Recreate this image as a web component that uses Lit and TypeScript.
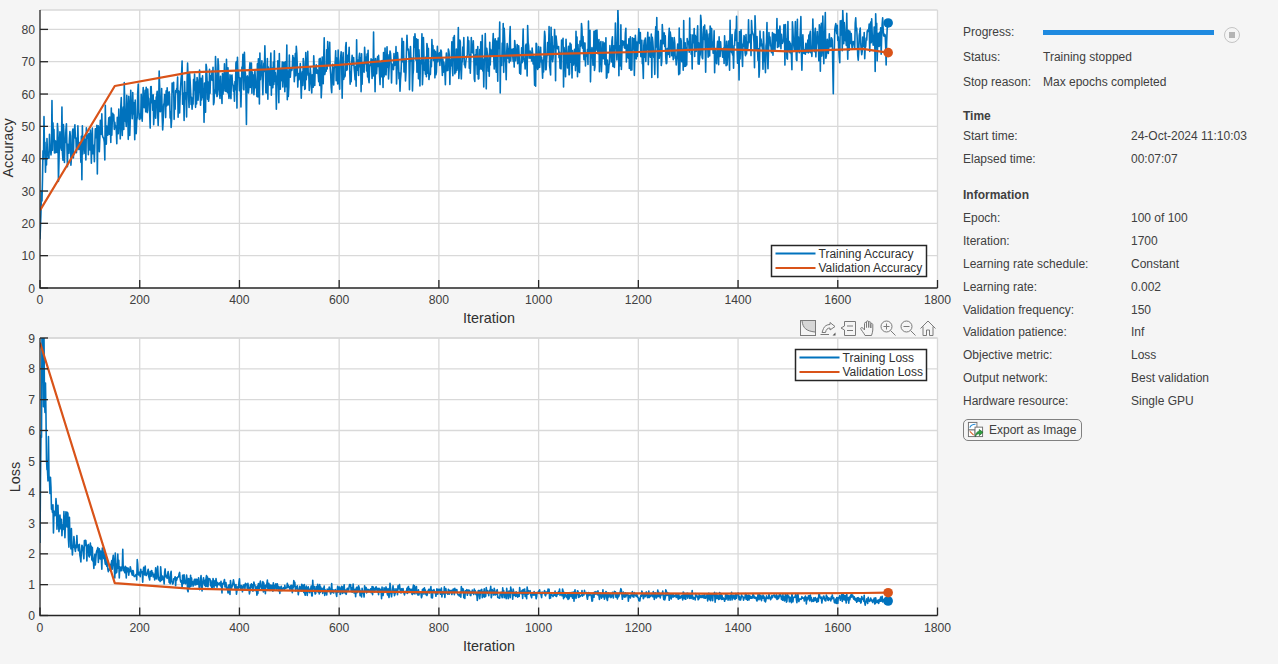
import { LitElement, html, svg, css } from "lit";
import { customElement, property } from "lit/decorators.js";

type Pt = [number, number];

function rng(seed: number) {
  return () => {
    seed |= 0; seed = (seed + 0x6d2b79f5) | 0;
    let t = Math.imul(seed ^ (seed >>> 15), 1 | seed);
    t = (t + Math.imul(t ^ (t >>> 7), 61 | t)) ^ t;
    return ((t ^ (t >>> 14)) >>> 0) / 4294967296;
  };
}
function interp(p: Pt[], x: number) {
  for (let i = 1; i < p.length; i++) {
    if (x <= p[i][0]) {
      const [a, b] = p[i - 1]; const [c, d] = p[i];
      return b + ((d - b) * (x - a)) / (c - a);
    }
  }
  return p[p.length - 1][1];
}

function accuracyData(): Pt[] {
  const r = rng(11);
  const mean: Pt[] = [[0, 15], [3, 28], [7, 42], [20, 45], [100, 46], [130, 50], [170, 53], [230, 56.5], [300, 60.5], [400, 64.5], [500, 66.5], [600, 68], [800, 70.5], [1000, 72], [1200, 73.5], [1400, 75], [1600, 77], [1700, 78]];
  const out: Pt[] = [];
  for (let i = 0; i <= 1700; i++) {
    const amp = i < 110 ? 7 : 8.2;
    const g = (r() + r() + r() - 1.5) * amp;
    const spike = r() < 0.05 ? (r() < 0.75 ? -8 : 5) * r() : 0;
    out.push([i, interp(mean, i) + (i < 3 ? 0 : g + spike)]);
  }
  out[8][1] = 53; out[24][1] = 58; out[44][1] = 56; out[37][1] = 33; out[62][1] = 38; out[84][1] = 33.5;
  out[1675][1] = 67; out[1698][1] = 76; out[1699][1] = 80; out[1700][1] = 82;
  return out;
}
function lossData(): Pt[] {
  const r = rng(29);
  const mean: Pt[] = [[0, 4], [2, 7], [5, 8.2], [10, 7.4], [13, 5.2], [17, 4.8], [24, 3.4], [40, 3.05], [55, 2.85], [62, 2.3], [100, 2.1], [130, 1.75], [170, 1.5], [230, 1.3], [300, 1.08], [400, 0.95], [600, 0.82], [800, 0.76], [1000, 0.7], [1200, 0.65], [1400, 0.6], [1700, 0.5]];
  const out: Pt[] = [];
  for (let i = 0; i <= 1700; i++) {
    const m = interp(mean, i);
    const amp = i < 14 ? 2 : 0.04 + m * 0.2;
    const g = (r() + r() + r() - 1.5) * amp;
    out.push([i, m + g]);
  }
  out[4][1] = 9.2; out[8][1] = 9.1; out[17][1] = 5.8; out[56][1] = 3.3; out[166][1] = 2.15;
  out[1700][1] = 0.47;
  return out;
}

const valAcc: Pt[] = [[0, 24], [150, 62.5], [300, 66.7], [450, 67.6], [600, 69], [750, 71], [900, 71.7], [1050, 72.5], [1200, 73], [1350, 74], [1500, 73.2], [1650, 74], [1700, 72.8]];
const valLoss: Pt[] = [[0, 8.85], [150, 1.05], [300, 0.87], [450, 0.82], [600, 0.78], [750, 0.76], [900, 0.74], [1050, 0.73], [1200, 0.72], [1350, 0.71], [1500, 0.72], [1650, 0.73], [1700, 0.74]];

interface PlotConfig {
  height: number; top: number; bottom: number; yMax: number; yTicks: number[];
  yLabel: string; yLabelX: number; yLabelY: number;
  train: Pt[]; val: Pt[]; trainName: string; valName: string;
  legendX: number; legendY: number; legendW: number; clipId: string;
}

const X0 = 40, X1 = 937.5, XMAX = 1800;
const sx = (v: number) => X0 + ((X1 - X0) * v) / XMAX;

@customElement("line-plot")
class LinePlot extends LitElement {
  @property({ attribute: false }) config!: PlotConfig;
  static styles = css`
    :host { display: block; }
    svg { display: block; overflow: visible; }
    .tick-label { font: 12.2px "Liberation Sans", Arial, sans-serif; fill: #404040; }
    .axis-label { font: 14.4px "Liberation Sans", Arial, sans-serif; fill: #303030; }
    .legend-label { font: 12px "Liberation Sans", Arial, sans-serif; fill: #303030; }
    .area { fill: #ffffff; }
    .grid { stroke: #d9d9d9; stroke-width: 1.3; fill: none; }
    .axis { stroke: #262626; stroke-width: 1.3; fill: none; }
    .train { stroke: #0072bd; stroke-width: 1.6; fill: none; stroke-linejoin: round; }
    .train-key { stroke: #0072bd; stroke-width: 2; }
    .val { stroke: #d95319; stroke-width: 2.2; fill: none; stroke-linejoin: round; }
    .train-dot { fill: #0072bd; }
    .val-dot { fill: #d95319; }
    .legend-box { fill: #ffffff; stroke: #262626; stroke-width: 1.5; }
  `;
  render() {
    const c = this.config;
    const sy = (v: number) => c.bottom - ((c.bottom - c.top) * v) / c.yMax;
    const toPath = (p: Pt[]) => "M" + p.map(([x, y]) => `${sx(x).toFixed(2)} ${sy(y).toFixed(2)}`).join("L");
    const xTicks = [0, 200, 400, 600, 800, 1000, 1200, 1400, 1600, 1800];
    const lastT = c.train[c.train.length - 1];
    const lastV = c.val[c.val.length - 1];
    const lx = c.legendX, ly = c.legendY, lw = c.legendW;
    return html`<svg width="950" height=${c.height} viewBox="0 0 950 ${c.height}">
      <defs><clipPath id=${c.clipId}><rect x=${X0} y=${c.top} width=${X1 - X0} height=${c.bottom - c.top}></rect></clipPath></defs>
      <rect class="area" x=${X0} y=${c.top} width=${X1 - X0} height=${c.bottom - c.top}></rect>
      ${xTicks.slice(1).map((t) => svg`<line class="grid" x1=${sx(t)} x2=${sx(t)} y1=${c.top} y2=${c.bottom}></line>`)}
      ${c.yTicks.slice(1).map((t) => svg`<line class="grid" x1=${X0} x2=${X1} y1=${sy(t)} y2=${sy(t)}></line>`)}
      <line class="grid" x1=${X0} x2=${X1} y1=${c.top} y2=${c.top}></line>
      <g clip-path="url(#${c.clipId})">
        <path class="train" d=${toPath(c.train)}></path>
        <path class="val" d=${toPath(c.val)}></path>
      </g>
      <circle class="train-dot" cx=${sx(lastT[0]) + 0.5} cy=${sy(lastT[1])} r="4.8"></circle>
      <circle class="val-dot" cx=${sx(lastV[0]) + 0.5} cy=${sy(lastV[1])} r="4.8"></circle>
      <path class="axis" d="M${X0} ${c.top}V${c.bottom}H${X1}"></path>
      ${xTicks.map((t) => svg`
        <line class="axis" x1=${sx(t)} x2=${sx(t)} y1=${c.bottom} y2=${c.bottom - 8}></line>
        <text class="tick-label" x=${sx(t)} y=${c.bottom + 16} text-anchor="middle">${t}</text>`)}
      ${c.yTicks.map((t) => svg`
        <line class="axis" x1=${X0} x2=${X0 + 8} y1=${sy(t)} y2=${sy(t)}></line>
        <text class="tick-label" x="35" y=${sy(t) + 4.5} text-anchor="end">${t}</text>`)}
      <text class="axis-label" x="489" y=${c.bottom + 35} text-anchor="middle">Iteration</text>
      <text class="axis-label" text-anchor="middle" transform="translate(${c.yLabelX} ${c.yLabelY}) rotate(-90)">${c.yLabel}</text>
      <rect class="legend-box" x=${lx} y=${ly} width=${lw} height="31"></rect>
      <line class="train-key" x1=${lx + 4} x2=${lx + 44} y1=${ly + 8} y2=${ly + 8}></line>
      <line class="val" x1=${lx + 4} x2=${lx + 44} y1=${ly + 22.5} y2=${ly + 22.5}></line>
      <text class="legend-label" x=${lx + 47} y=${ly + 12.5}>${c.trainName}</text>
      <text class="legend-label" x=${lx + 47} y=${ly + 26.5}>${c.valName}</text>
    </svg>`;
  }
}

const rowsTop = [
  { label: "Start time:", value: "24-Oct-2024 11:10:03" },
  { label: "Elapsed time:", value: "00:07:07" },
];
const rowsInfo = [
  ["Epoch:", "100 of 100"],
  ["Iteration:", "1700"],
  ["Learning rate schedule:", "Constant"],
  ["Learning rate:", "0.002"],
  ["Validation frequency:", "150"],
  ["Validation patience:", "Inf"],
  ["Objective metric:", "Loss"],
  ["Output network:", "Best validation"],
  ["Hardware resource:", "Single GPU"],
];

@customElement("app-root")
class AppRoot extends LitElement {
  static styles = css`
    :host { display: block; width: 1278px; height: 664px; background: #f5f5f5; overflow: hidden; font: 12px "Liberation Sans", Arial, sans-serif; color: #404040; }
    .page { display: flex; height: 664px; }
    .plots { position: relative; width: 950px; flex: none; }
    .toolbar { position: absolute; left: 800px; top: 320px; display: flex; gap: 4px; }
    .toolbar svg { display: block; width: 16px; height: 16px; }
    .ti { fill: none; stroke: #7a7a7a; stroke-width: 1; }
    .panel { margin-left: 13px; width: 300px; padding-top: 19px; display: flex; flex-direction: column; }
    .status-row { display: grid; grid-template-columns: 80px auto; height: 25px; align-items: center; }
    .progress-wrap { display: flex; align-items: flex-start; }
    .track { width: 171px; height: 5px; background: #1f8ae0; margin-top: 10px; }
    .stop { margin-left: 10px; margin-top: 7px; width: 16px; height: 16px; box-sizing: border-box; border: 1px solid #c4c4c4; border-radius: 50%; display: flex; align-items: center; justify-content: center; }
    .stop i { display: block; width: 6px; height: 6px; background: #b4b4b4; }
    .heading { font-weight: 700; height: 23px; display: flex; align-items: center; }
    .time-head { margin-top: 13px; height: 17px; }
    .info-head { margin-top: 13px; padding-bottom: 1px; }
    .row { display: grid; grid-template-columns: 168px auto; height: 23px; align-items: center; }
    .row.compact { height: 22.8px; }
    .export { align-self: flex-start; margin-top: 7px; width: 119px; height: 22px; box-sizing: border-box; border: 1px solid #808080; border-radius: 5px; display: flex; align-items: center; gap: 5px; padding: 0 0 1px 3px; background: #f5f5f5; font: inherit; color: inherit; }
    .export svg { display: block; flex: none; }
    .e1 { fill: #fff; stroke: #6f6f6f; stroke-width: 1; }
    .e2 { fill: none; stroke: #2b8fd8; stroke-width: 1.2; }
    .e3 { fill: none; stroke: #d9622b; stroke-width: 1.2; }
    .e4 { fill: #2f9e3f; stroke: #1c6b28; stroke-width: .7; }
  `;
  private accCfg: PlotConfig = {
    height: 330, top: 10, bottom: 288, yMax: 86, yTicks: [0, 10, 20, 30, 40, 50, 60, 70, 80],
    yLabel: "Accuracy", yLabelX: 13, yLabelY: 148, train: accuracyData(), val: valAcc,
    trainName: "Training Accuracy", valName: "Validation Accuracy",
    legendX: 771.5, legendY: 245.5, legendW: 155, clipId: "clip-acc",
  };
  private lossCfg: PlotConfig = {
    height: 334, top: 8, bottom: 285.5, yMax: 9, yTicks: [0, 1, 2, 3, 4, 5, 6, 7, 8, 9],
    yLabel: "Loss", yLabelX: 20, yLabelY: 147, train: lossData(), val: valLoss,
    trainName: "Training Loss", valName: "Validation Loss",
    legendX: 795.5, legendY: 19.5, legendW: 131, clipId: "clip-loss",
  };
  render() {
    return html`<div class="page">
      <div class="plots">
        <line-plot .config=${this.accCfg}></line-plot>
        <line-plot .config=${this.lossCfg}></line-plot>
        <div class="toolbar">
          <svg viewBox="0 0 16 16"><rect x=".5" y=".5" width="15" height="15" fill="#f4f4f4" stroke="#7a7a7a"></rect><path d="M2 1C3 8 6 11 15 12V1Z" fill="#d6d6d6"></path><path class="ti" d="M2 1C3 8 6 11 15 12"></path></svg>
          <svg viewBox="0 0 16 16"><path class="ti" d="M.5 14.5H9M2 12.5L3.5 8.5C4.5 6 7 4.5 10 4.5V2.5L15 6.5L10 10V8C7.5 8 6 9.5 5.5 12.5Z"></path><path d="M12.5 15.5L15.5 12.5V15.5Z" fill="#555"></path></svg>
          <svg viewBox="0 0 16 16"><path class="ti" d="M4.5 1.5H15.5V15.5H4.5V10L1 8L4.5 6ZM7 6H13M7 10.5H13"></path></svg>
          <svg viewBox="0 0 16 16"><path class="ti" d="M5 15.5C4 13 1 10 .7 8.5C.7 7.5 2 7.2 3 8.2L4.5 10V3.5C4.5 2 6.3 2 6.5 3.5V7.5V2C6.5 .4 8.5 .4 8.7 2V7.5V2.6C8.9 1.2 10.7 1.3 10.8 3V8V4.4C11 3 12.8 3.2 12.8 4.8V10C12.8 12 12 13.5 11.5 15.5Z"></path></svg>
          <svg viewBox="0 0 16 16"><circle class="ti" cx="6.5" cy="6.5" r="5.5"></circle><path class="ti" d="M10.5 10.5L15.5 15.5M6.5 3.5V9.5M3.5 6.5H9.5"></path></svg>
          <svg viewBox="0 0 16 16"><circle class="ti" cx="6.5" cy="6.5" r="5.5"></circle><path class="ti" d="M10.5 10.5L15.5 15.5M3.5 6.5H9.5"></path></svg>
          <svg viewBox="0 0 16 16"><path class="ti" d="M.5 8.5L8 1L15.5 8.5M3 6.5V15.5H6.5V10H9.5V15.5H13V6.5"></path></svg>
        </div>
      </div>
      <div class="panel">
        <div class="status-row"><span>Progress:</span><div class="progress-wrap"><div class="track"></div><div class="stop"><i></i></div></div></div>
        <div class="status-row"><span>Status:</span><span>Training stopped</span></div>
        <div class="status-row"><span>Stop reason:</span><span>Max epochs completed</span></div>
        <div class="heading time-head">Time</div>
        ${rowsTop.map((r) => html`<div class="row"><span>${r.label}</span><span>${r.value}</span></div>`)}
        <div class="heading info-head">Information</div>
        ${rowsInfo.map(([a, b]) => html`<div class="row compact"><span>${a}</span><span>${b}</span></div>`)}
        <button class="export">
          <svg width="17" height="17" viewBox="0 0 18 18">
            <rect class="e1" x="1.5" y="1.5" width="9" height="8"></rect><path class="e2" d="M3 7C4 4 6 3.5 9 3.5"></path>
            <rect class="e1" x="1.5" y="9.5" width="7" height="7"></rect><path class="e3" d="M3 11L7 15"></path>
            <rect class="e1" x="8.5" y="6.5" width="8" height="10"></rect>
            <path class="e4" d="M9 16.5C9 12.5 11 11 13 11V9L17 12L13 15.5V13.3C11.5 13.3 10 14 9 16.5Z"></path>
          </svg>
          <span>Export as Image</span>
        </button>
      </div>
    </div>`;
  }
}
